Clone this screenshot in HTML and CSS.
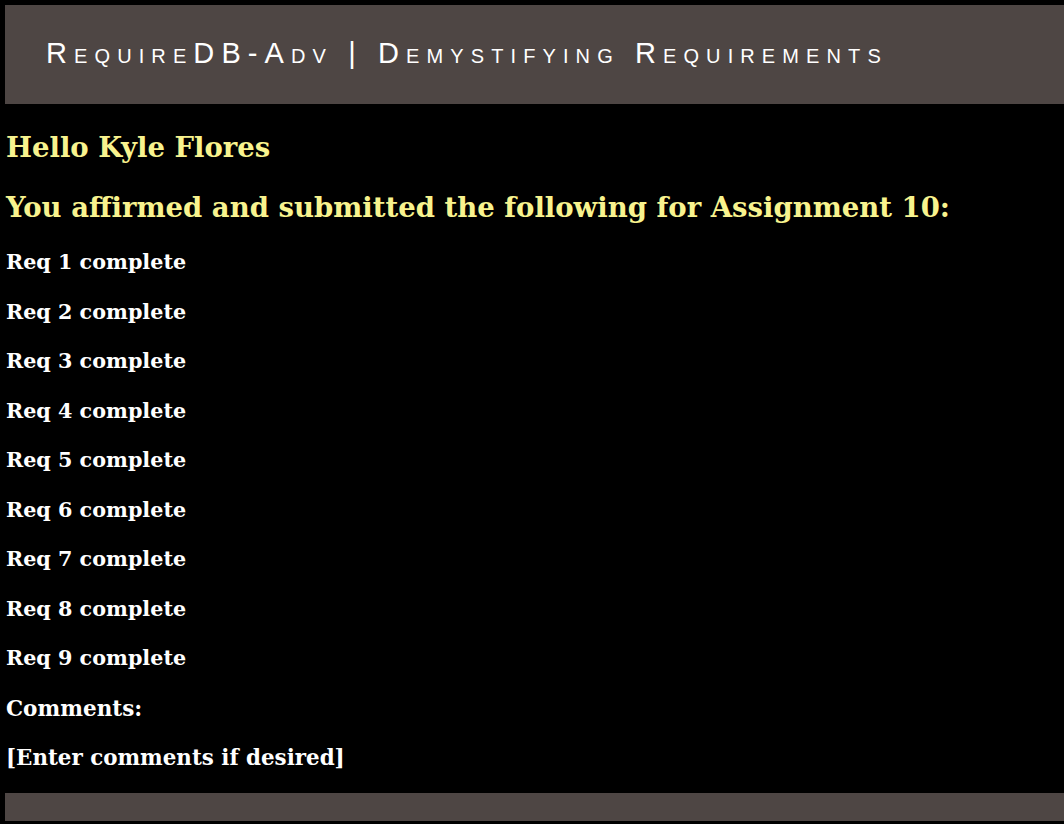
FILE: index.html
```html
<!DOCTYPE html>
<html lang="en">
<head>
<meta charset="utf-8">
<title>RequireDB-Adv | Demystifying Requirements</title>
<link rel="stylesheet" href="styles.css">
</head>
<body>
<header class="banner">
  <div class="banner-title">RequireDB-Adv | Demystifying Requirements</div>
</header>
<main class="content">
  <h2 class="greet">Hello Kyle Flores</h2>
  <h2 class="intro">You affirmed and submitted the following for Assignment 10:</h2>
  <ul class="reqs">
    <li class="req">Req 1 complete</li>
    <li class="req">Req 2 complete</li>
    <li class="req">Req 3 complete</li>
    <li class="req">Req 4 complete</li>
    <li class="req">Req 5 complete</li>
    <li class="req">Req 6 complete</li>
    <li class="req">Req 7 complete</li>
    <li class="req">Req 8 complete</li>
    <li class="req">Req 9 complete</li>
    <li class="req label">Comments:</li>
    <li class="req comment">[Enter comments if desired]</li>
  </ul>
</main>
<footer class="footer-bar"></footer>
</body>
</html>
```
FILE: styles.css
```css
html {
  background: #000;
}
body {
  margin: 5px 0 0 5px;
  background: #000;
  font-family: "DejaVu Serif", Georgia, serif;
  color: #fff;
}
.banner {
  height: 99px;
  background: #4e4644;
  display: flex;
  align-items: center;
  padding-left: 41px;
}
.banner-title {
  font-family: "Liberation Sans", Arial, sans-serif;
  font-variant: small-caps;
  font-size: 29px;
  letter-spacing: 0.245em;
  color: #fff;
  white-space: nowrap;
  padding-bottom: 2px;
}
.content {
  padding-left: 1px;
  display: flex;
  flex-direction: column;
}
.greet, .intro {
  margin: 0;
  font-size: 27.5px;
  font-weight: bold;
  color: #f8f38e;
  line-height: 60px;
  white-space: nowrap;
}
.greet {
  margin-top: 13px;
}
.intro {
  margin-bottom: 1px;
}
.reqs {
  list-style: none;
  margin: 0;
  padding: 0;
}
.req {
  font-size: 20.7px;
  font-weight: bold;
  line-height: 49.5px;
  height: 49.5px;
  white-space: nowrap;
}
.label {
  font-size: 21.5px;
}
.comment {
  font-size: 21.4px;
}
.footer-bar {
  margin-top: 10px;
  height: 28px;
  background: #4e4644;
}
```
